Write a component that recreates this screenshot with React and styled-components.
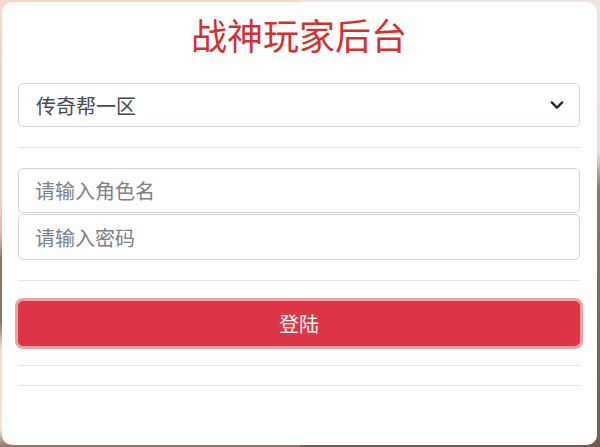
import React from "react";
import styled, { createGlobalStyle } from "styled-components";

const GlobalStyle = createGlobalStyle`
  html, body {
    margin: 0;
    padding: 0;
    height: 100%;
  }
  body {
    font-family: "Noto Sans CJK SC", "Noto Sans", sans-serif;
    background:
      linear-gradient(180deg, #f6d7c6 0%, #f3cdc2 45%, #e9b7b0 52%, #8d766c 58%, #8a7369 72%, #f4dccd 78%, #f6e2d4 96%, #8a7164 100%) left / 50% 100% no-repeat,
      linear-gradient(180deg, #f0e5dc 0%, #ece0d6 34%, #8a776b 42%, #7c695d 70%, #6f5d52 100%) right / 50% 100% no-repeat;
  }
`;

const Card = styled.div`
  box-sizing: border-box;
  margin: 2px 3px 0 2px;
  height: 443px;
  background: #fff;
  border-radius: 10px;
  padding: 11px 17px 0 16px;
  display: flex;
  flex-direction: column;
`;

const Title = styled.h1`
  margin: 0;
  font-size: 36px;
  line-height: 43px;
  font-weight: 400;
  color: #d3302e;
  text-align: center;
`;

const SelectWrap = styled.div`
  position: relative;
  margin-top: 27px;
`;

const Select = styled.select`
  box-sizing: border-box;
  width: 100%;
  height: 44px;
  padding: 0 40px 0 17px;
  font-family: inherit;
  font-size: 20px;
  color: #444a50;
  background: #fff;
  border: 1px solid #ced4da;
  border-radius: 5px;
  appearance: none;
  outline: none;
`;

const Chevron = styled.svg`
  position: absolute;
  right: 16px;
  top: 16px;
  width: 14px;
  height: 12px;
  pointer-events: none;
`;

const Rule = styled.hr`
  margin: ${(p) => p.$top}px 0 0;
  border: 0;
  border-top: 1px solid #e3e5e8;
  height: 0;
`;

const Fields = styled.div`
  display: flex;
  flex-direction: column;
  gap: 1px;
  margin-top: 20px;
`;

const Input = styled.input`
  box-sizing: border-box;
  width: 100%;
  height: ${(p) => p.$h}px;
  padding: 0 16px;
  font-family: inherit;
  font-size: 20px;
  color: #444a50;
  border: 1px solid #ced4da;
  border-radius: 5px;
  outline: none;
  &::placeholder {
    color: #7b8188;
  }
`;

const Button = styled.button`
  box-sizing: border-box;
  margin-top: 20px;
  width: 100%;
  height: 45px;
  font-family: inherit;
  font-size: 20px;
  color: #fff;
  background: #dc3545;
  border: 1px solid #dc3545;
  border-radius: 5px;
  box-shadow: 0 0 0 3px rgba(225, 83, 97, 0.55);
  cursor: pointer;
`;

export default function App() {
  return (
    <>
      <GlobalStyle />
      <Card>
        <Title>战神玩家后台</Title>
        <SelectWrap>
          <Select defaultValue="1">
            <option value="1">传奇帮一区</option>
          </Select>
          <Chevron viewBox="0 0 16 12">
            <path d="M2 3l6 6 6-6" fill="none" stroke="#23272b" strokeWidth="2.6" strokeLinecap="round" strokeLinejoin="round" />
          </Chevron>
        </SelectWrap>
        <Rule $top={20} />
        <Fields>
          <Input $h={45} placeholder="请输入角色名" />
          <Input $h={46} type="password" placeholder="请输入密码" />
        </Fields>
        <Rule $top={20} />
        <Button>登陆</Button>
        <Rule $top={19} />
        <Rule $top={19} />
      </Card>
    </>
  );
}
